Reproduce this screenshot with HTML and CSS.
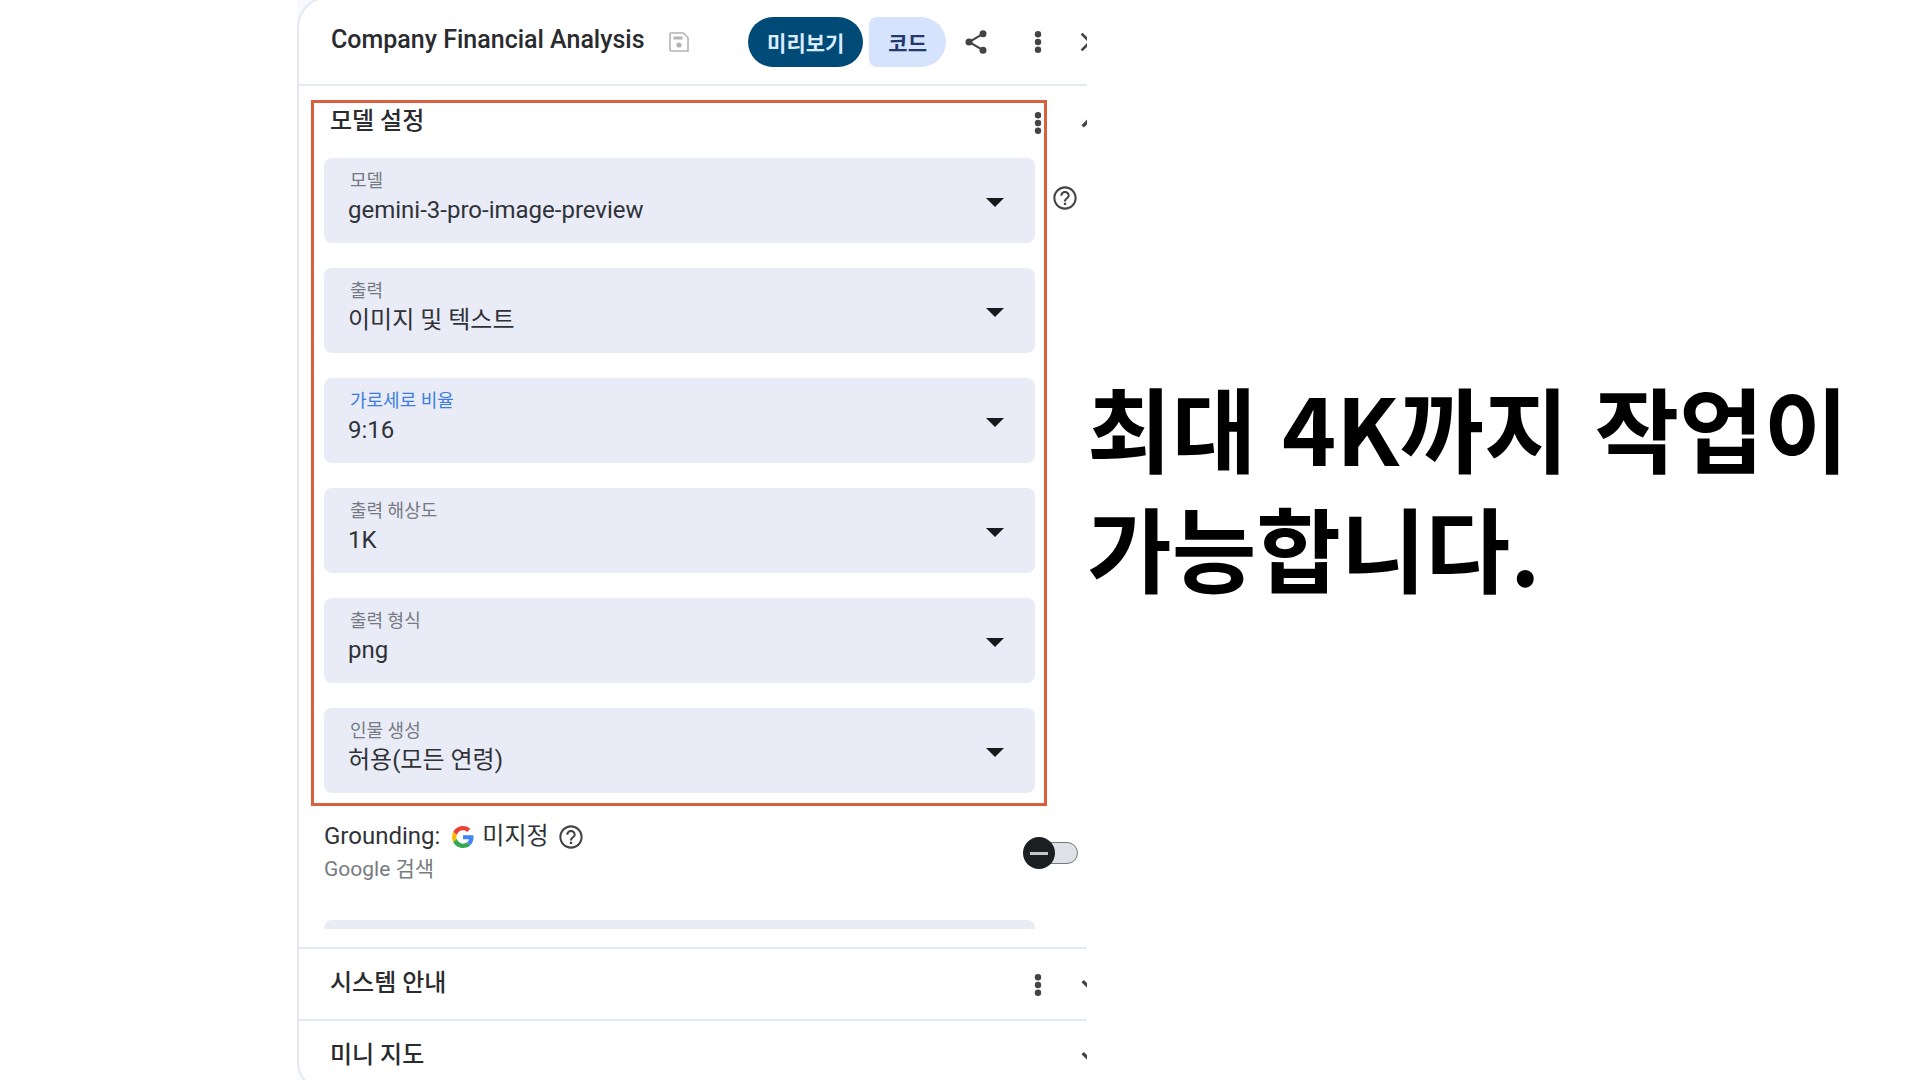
FILE: index.html
```html
<!DOCTYPE html>
<html lang="ko">
  <head>
    <meta charset="UTF-8" />
    <meta name="viewport" content="width=device-width, initial-scale=1.0" />
    <title>Company Financial Analysis</title>
    <link rel="stylesheet" href="styles.css">
  </head>
  <body>
    <!-- Shared icons -->
    <svg class="sprite" width="0" height="0" aria-hidden="true">
      <symbol id="more" viewBox="0 0 24 24">
        <circle cx="12" cy="6.2" r="2.4" />
        <circle cx="12" cy="12" r="2.4" />
        <circle cx="12" cy="17.8" r="2.4" />
      </symbol>
      <symbol id="help" viewBox="0 0 24 24">
        <path d="M11 18h2v-2h-2v2zm1-16C6.48 2 2 6.48 2 12s4.48 10 10 10 10-4.48 10-10S17.52 2 12 2zm0 18.2c-4.5 0-8.2-3.7-8.2-8.2s3.7-8.2 8.2-8.2 8.2 3.7 8.2 8.2-3.7 8.2-8.2 8.2zM12 6c-2.21 0-4 1.79-4 4h1.8c0-1.2 1-2.2 2.2-2.2s2.2 1 2.2 2.2c0 2-3.1 1.75-3.1 5h1.8c0-2.25 3.1-2.5 3.1-5 0-2.21-1.79-4-4-4z" />
      </symbol>
      <symbol id="down" viewBox="0 0 24 24">
        <path d="M7.4 8.2 12 12.8l4.6-4.6L18.4 10 12 16.4 5.6 10z" />
      </symbol>
      <symbol id="up" viewBox="0 0 24 24">
        <path d="M7.4 15.4 12 10.8l4.6 4.6 1.8-1.8L12 7.2l-6.4 6.4z" />
      </symbol>
      <symbol id="arrow" viewBox="0 0 20 10">
        <path d="M1 0h18l-9 9z" />
      </symbol>
    </svg>

    <main class="slide">
      <section class="shot">
        <div class="panel">
          <header class="header">
            <h1 class="title">Company Financial Analysis</h1>
            <button class="icon-button save" aria-label="저장">
              <svg class="icon-small" viewBox="0 0 24 24">
                <path d="M4 3h12.5L21 7.5V21H4a1 1 0 0 1-1-1V4a1 1 0 0 1 1-1z" fill="none" stroke="currentColor" stroke-width="1.6" />
                <path d="M6.5 6.5h9v3h-9z" />
                <circle cx="12" cy="15" r="2.6" />
              </svg>
            </button>
            <div class="tabs">
              <button class="tab tab-active">미리보기</button>
              <button class="tab">코드</button>
            </div>
            <button class="icon-button share" aria-label="공유">
              <svg class="icon-medium" viewBox="0 0 24 24">
                <path d="M18 5 6 12l12 7" fill="none" stroke="currentColor" stroke-width="1.8" />
                <circle cx="18" cy="5" r="3" />
                <circle cx="6" cy="12" r="3" />
                <circle cx="18" cy="19" r="3" />
              </svg>
            </button>
            <div class="actions">
              <button class="icon-button" aria-label="더보기"><svg class="icon"><use href="#more" /></svg></button>
              <button class="icon-button" aria-label="닫기">
                <svg class="icon" viewBox="0 0 24 24">
                  <path d="M19 6.41 17.59 5 12 10.59 6.41 5 5 6.41 10.59 12 5 17.59 6.41 19 12 13.41 17.59 19 19 17.59 13.41 12z" />
                </svg>
              </button>
            </div>
          </header>

          <!-- Model settings -->
          <section class="settings">
            <div class="model">
              <div class="row">
                <h2 class="row-title">모델 설정</h2>
                <div class="actions">
                  <button class="icon-button" aria-label="더보기"><svg class="icon"><use href="#more" /></svg></button>
                  <button class="icon-button" aria-label="접기"><svg class="icon"><use href="#up" /></svg></button>
                </div>
              </div>

              <div class="fields">
                <div class="field">
                  <label for="model">모델</label>
                  <select id="model"><option>gemini-3-pro-image-preview</option></select>
                  <svg class="arrow"><use href="#arrow" /></svg>
                </div>
                <button class="icon-button help" aria-label="도움말"><svg class="icon-medium"><use href="#help" /></svg></button>

                <div class="field">
                  <label for="output">출력</label>
                  <select id="output"><option>이미지 및 텍스트</option></select>
                  <svg class="arrow"><use href="#arrow" /></svg>
                </div>

                <div class="field field-active">
                  <label for="ratio">가로세로 비율</label>
                  <select id="ratio"><option>9:16</option></select>
                  <svg class="arrow"><use href="#arrow" /></svg>
                </div>

                <div class="field">
                  <label for="resolution">출력 해상도</label>
                  <select id="resolution"><option>1K</option></select>
                  <svg class="arrow"><use href="#arrow" /></svg>
                </div>

                <div class="field">
                  <label for="format">출력 형식</label>
                  <select id="format"><option>png</option></select>
                  <svg class="arrow"><use href="#arrow" /></svg>
                </div>

                <div class="field">
                  <label for="people">인물 생성</label>
                  <select id="people"><option>허용(모든 연령)</option></select>
                  <svg class="arrow"><use href="#arrow" /></svg>
                </div>
              </div>
              <div class="highlight"></div>
            </div>

            <!-- Grounding -->
            <div class="grounding">
              <div>
                <div class="grounding-name">
                  <label for="grounding">Grounding:</label>
                  <svg class="google" viewBox="0 0 48 48">
                    <path fill="#ea4335" d="M24 9.5c3.54 0 6.71 1.22 9.21 3.6l6.85-6.85C35.9 2.38 30.47 0 24 0 14.62 0 6.51 5.38 2.56 13.22l7.98 6.19C12.43 13.72 17.74 9.5 24 9.5z" />
                    <path fill="#4285f4" d="M46.98 24.55c0-1.57-.15-3.09-.38-4.55H24v9.02h12.94c-.58 2.96-2.26 5.48-4.78 7.18l7.73 6c4.51-4.18 7.09-10.36 7.09-17.65z" />
                    <path fill="#fbbc05" d="M10.53 28.59c-.48-1.45-.76-2.99-.76-4.59s.27-3.14.76-4.59l-7.98-6.19C.92 16.46 0 20.12 0 24c0 3.88.92 7.54 2.56 10.78l7.97-6.19z" />
                    <path fill="#34a853" d="M24 48c6.48 0 11.93-2.13 15.89-5.81l-7.73-6c-2.15 1.45-4.92 2.3-8.16 2.3-6.26 0-11.57-4.22-13.47-9.91l-7.98 6.19C6.51 42.62 14.62 48 24 48z" />
                  </svg>
                  <span>미지정</span>
                  <button class="icon-button" aria-label="도움말"><svg class="icon-medium"><use href="#help" /></svg></button>
                </div>
                <p class="grounding-source">Google 검색</p>
              </div>
              <input type="checkbox" role="switch" id="grounding" class="switch">
            </div>
            <div class="next-field"></div>
          </section>

          <section class="row collapsed">
            <h2 class="row-title">시스템 안내</h2>
            <div class="actions">
              <button class="icon-button" aria-label="더보기"><svg class="icon"><use href="#more" /></svg></button>
              <button class="icon-button" aria-label="펼치기"><svg class="icon"><use href="#down" /></svg></button>
            </div>
          </section>
          <section class="row collapsed">
            <h2 class="row-title">미니 지도</h2>
            <div class="actions">
              <button class="icon-button" aria-label="펼치기"><svg class="icon"><use href="#down" /></svg></button>
            </div>
          </section>
        </div>
      </section>

      <p class="caption">최대 4K까지 작업이<br>가능합니다.</p>
    </main>
  </body>
</html>
```
FILE: styles.css
```css
* {
  box-sizing: border-box;
}
body {
  margin: 0;
  background: #fff;
  color: #2f3237;
  font-family: Roboto, "Noto Sans CJK KR", sans-serif;
  font-size: 24px;
  overflow: hidden;
}
h1,
h2,
p {
  margin: 0;
}
button {
  border: 0;
  padding: 0;
  font: inherit;
  cursor: pointer;
}
.sprite {
  position: absolute;
}
.slide {
  display: grid;
  grid-template-columns: 297fr 790fr 833fr;
  height: 100vh;
}
.shot {
  grid-column: 2;
  min-width: 0;
  overflow: hidden;
  background: #f8faff;
}
/* runs past the right edge of the shot, which cuts it off */
.panel {
  margin: -4px -39px 0 0;
  border: 2px solid #e4e8f4;
  border-radius: 32px;
  background: #fff;
}

/* Header */
.header {
  display: flex;
  align-items: center;
  height: 88px;
  padding: 2px 18px 0 32px;
  border-bottom: 2px solid #e4e8f4;
}
.title {
  color: #2a2b2e;
  font-size: 25px;
  font-weight: 500;
  line-height: 32px;
  padding-bottom: 4px;
  white-space: nowrap;
}
.tabs {
  display: flex;
  gap: 6px;
}
.tab {
  height: 50px;
  padding: 0 19px;
  border-radius: 8px 25px 25px 8px;
  background: #d6e3fd;
  color: #24386f;
  font-size: 21px;
  font-weight: 700;
  white-space: nowrap;
}
.tab-active {
  border-radius: 25px;
  background: #004a77;
  color: #dcecff;
}
.actions {
  display: flex;
  gap: 20px;
}
.icon-button {
  display: flex;
  background: none;
  color: #444;
}
.save {
  margin: 0 auto 0 22px;
  color: #b4b4b4;
}
.share {
  margin: 0 32px 0 16px;
}
.help {
  margin-bottom: 6px;
}
.icon {
  width: 32px;
  height: 32px;
  fill: currentColor;
}
.icon-medium {
  width: 28px;
  height: 28px;
  fill: currentColor;
}
.icon-small {
  width: 24px;
  height: 24px;
  fill: currentColor;
}

/* Sections */
.row {
  display: flex;
  align-items: center;
  justify-content: space-between;
  height: 72px;
  padding: 2px 18px 0 31px;
}
.row-title {
  color: #2a2b2e;
  font-size: 24px;
  font-weight: 500;
  line-height: 32px;
  padding-bottom: 4px;
}
.collapsed {
  border-top: 2px solid #e4e8f4;
}
.settings {
  padding-bottom: 18px;
}
.model {
  position: relative;
}
.highlight {
  position: absolute;
  inset: 14px 77px -13px 12px;
  border: 3px solid #d9603f;
  pointer-events: none;
}

/* Fields */
.fields {
  display: grid;
  grid-template-columns: 1fr 28px;
  align-items: center;
  gap: 25px 16px;
  padding: 0 45px 0 25px;
}
.field {
  grid-column: 1;
  display: grid;
  grid-template-columns: 1fr 20px;
  align-items: center;
  height: 85px;
  padding: 10px 30px 17px 24px;
  border-radius: 8px;
  background: #e9ecf7;
}
.field label {
  padding-left: 2px;
  color: #767a82;
  font-size: 18px;
  line-height: 26px;
}
.field-active label {
  color: #3b7ce0;
}
.field select {
  grid-row: 2;
  appearance: none;
  border: 0;
  padding: 0;
  background: none;
  color: #2f3237;
  font: inherit;
  line-height: 32px;
}
.arrow {
  grid-row: 1 / 3;
  grid-column: 2;
  width: 20px;
  height: 10px;
  margin-top: 12px;
  fill: #17191c;
}

/* Grounding */
.grounding {
  display: flex;
  align-items: center;
  justify-content: space-between;
  padding: 27px 46px 0 25px;
}
.grounding-name {
  display: flex;
  align-items: center;
  gap: 8px;
  line-height: 33px;
}
.google {
  width: 22px;
  height: 22px;
  margin-left: 4px;
}
.grounding-source {
  color: #777b80;
  font-size: 21px;
  line-height: 33px;
}
.switch {
  appearance: none;
  position: relative;
  width: 50px;
  height: 22px;
  margin: 0;
  border: 1px solid #777;
  border-radius: 11px;
  background: #dfe1e6;
}
.switch::before {
  content: "";
  position: absolute;
  top: -6px;
  left: -6px;
  width: 32px;
  height: 32px;
  border-radius: 50%;
  background: linear-gradient(#c4c7cc, #c4c7cc) center / 18px 3px no-repeat #1c1f22;
}
.switch:checked::before {
  left: 22px;
}
.next-field {
  height: 9px;
  margin: 34px 89px 0 25px;
  border-radius: 8px 8px 0 0;
  background: #e9ecf5;
}

/* Caption */
.caption {
  align-self: center;
  padding-bottom: 108px;
  color: #000;
  font-family: "Noto Sans CJK KR", sans-serif;
  font-size: 92px;
  font-weight: 700;
  line-height: 120px;
  white-space: nowrap;
}
```
